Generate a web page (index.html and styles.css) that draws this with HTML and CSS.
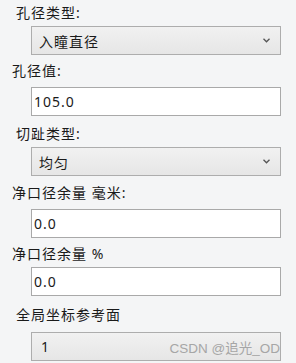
FILE: index.html
```html
<!DOCTYPE html>
<html lang="zh">
<head>
<meta charset="utf-8">
<link rel="stylesheet" href="styles.css">
</head>
<body>
<div class="panel">
  <div class="field">
    <div class="label label-sel">孔径类型:</div>
    <div class="select gap-s">
      <span>入瞳直径</span>
      <svg class="chev" width="7" height="5" viewBox="0 0 7 5"><path d="M0.5 0.8 L3.5 3.8 L6.5 0.8" fill="none" stroke="#555" stroke-width="1.3"/></svg>
    </div>
  </div>
  <div class="field mt6">
    <div class="label">孔径值:</div>
    <div class="input gap-l">105.0</div>
  </div>
  <div class="field mt8">
    <div class="label label-sel">切趾类型:</div>
    <div class="select gap-s">
      <span>均匀</span>
      <svg class="chev" width="7" height="5" viewBox="0 0 7 5"><path d="M0.5 0.8 L3.5 3.8 L6.5 0.8" fill="none" stroke="#555" stroke-width="1.3"/></svg>
    </div>
  </div>
  <div class="field mt7">
    <div class="label">净口径余量 毫米:</div>
    <div class="input gap-l">0.0</div>
  </div>
  <div class="field mt6">
    <div class="label">净口径余量 %</div>
    <div class="input gap-s">0.0</div>
  </div>
  <div class="field mt9">
    <div class="label label-sel">全局坐标参考面</div>
    <div class="select gap-xl">
      <span class="one">1</span>
    </div>
  </div>
</div>
<div class="watermark">CSDN @追光_OD</div>
</body>
</html>
```
FILE: styles.css
```css
html, body {
  margin: 0;
  padding: 0;
  background: #f4f5f6;
}
body {
  width: 296px;
  height: 363px;
  overflow: hidden;
  position: relative;
  font-family: "Noto Sans", "Noto Sans CJK SC", sans-serif;
  font-size: 14px;
  letter-spacing: 1px;
  color: #1a1a1a;
}
.panel {
  padding-top: 3px;
  display: flex;
  flex-direction: column;
}
.field {
  display: flex;
  flex-direction: column;
}
.mt6 { margin-top: 6px; }
.mt7 { margin-top: 7px; }
.mt8 { margin-top: 8px; }
.mt9 { margin-top: 9px; }
.label {
  height: 20px;
  line-height: 20px;
  padding-left: 12px;
  white-space: nowrap;
}
.label-sel {
  padding-left: 16px;
}
.gap-s { margin-top: 3px; }
.gap-l { margin-top: 6px; }
.gap-xl { margin-top: 7px; }
.select, .input {
  box-sizing: border-box;
  margin-left: 31px;
  width: 250px;
  height: 29px;
  display: flex;
  align-items: center;
}
.select {
  border: 1px solid #adadad;
  background: linear-gradient(#f1f1f1, #e6e6e6);
  padding-left: 7px;
  padding-right: 10px;
  justify-content: space-between;
}
.input {
  border: 1px solid #a9a9a9;
  background: #ffffff;
  padding-left: 2px;
}
.one {
  padding-left: 2px;
}
.chev {
  display: block;
}
.watermark {
  position: absolute;
  right: 16px;
  bottom: 5px;
  font-family: "Liberation Sans", "Noto Sans CJK SC", sans-serif;
  font-size: 13.5px;
  letter-spacing: 0;
  color: #a6a6a6;
  line-height: 18px;
}
```
